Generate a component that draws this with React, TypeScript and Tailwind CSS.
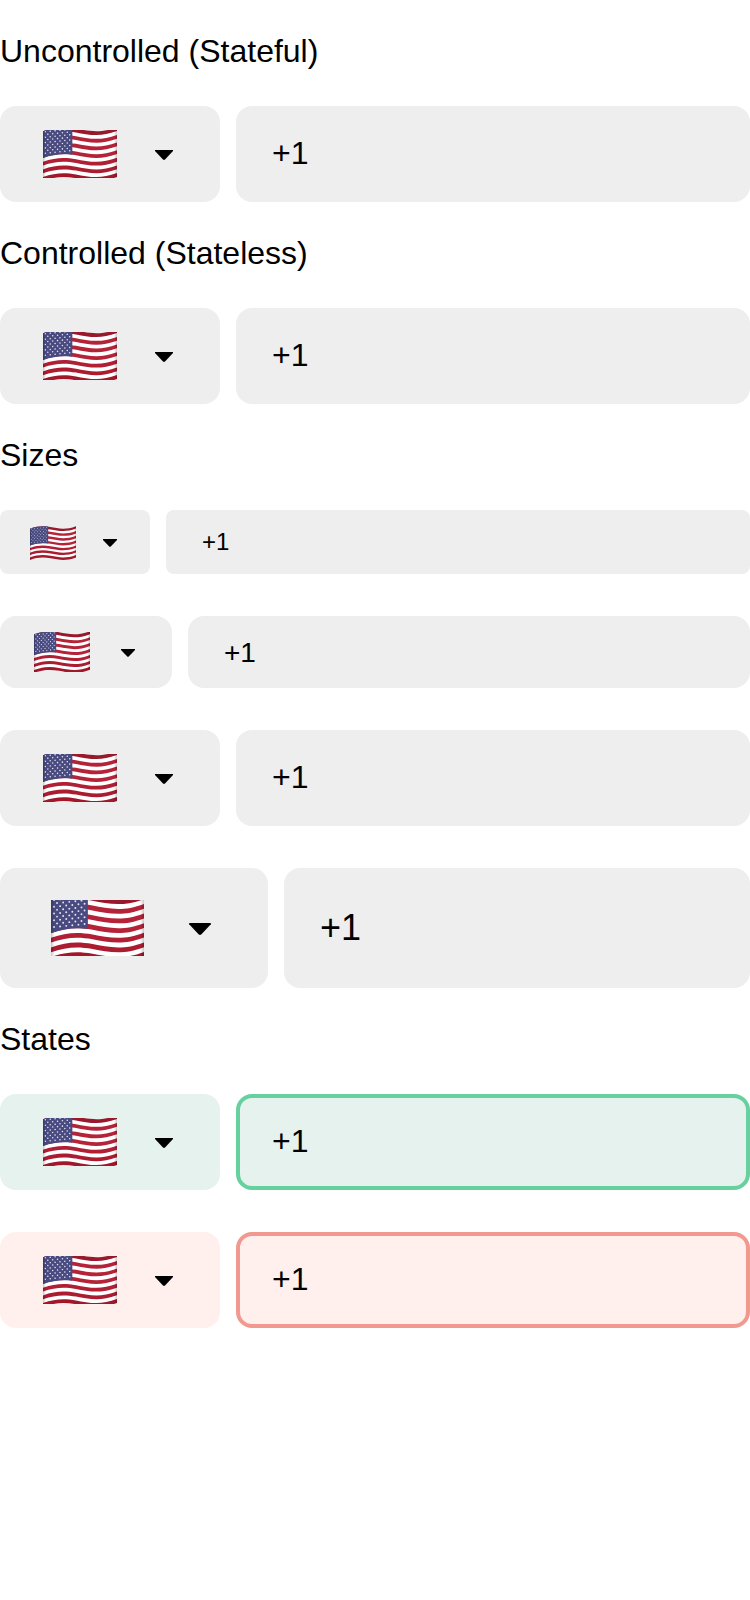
import { useId, useState } from "react";

type Size = "mini" | "compact" | "default" | "large";
type State = "idle" | "positive" | "error";

const sizes: Record<Size, { select: string; field: string; flag: string; art: string; caret: string }> = {
  mini: {
    select: "w-[150px] h-16 pt-0.5 pl-[30px] pr-[33px] rounded-lg",
    field: "h-16 text-2xl rounded-lg",
    flag: "w-[46px] h-9",
    art: "w-[46px] h-[34px]",
    caret: "w-[14px] h-2",
  },
  compact: {
    select: "w-[172px] h-[72px] pl-[34px] pr-[37px] rounded-2xl",
    field: "h-[72px] pt-0.5 text-[28px] rounded-2xl",
    flag: "w-14 h-10",
    art: "w-14 h-[42px]",
    caret: "w-[14px] h-2 mt-0.5",
  },
  default: {
    select: "w-[220px] h-24 pl-[43px] pr-[47px] rounded-2xl",
    field: "h-24 pb-0.5 text-[32px] rounded-2xl",
    flag: "w-[74px] h-12",
    art: "w-[74px] h-[54px]",
    caret: "w-[18px] h-[10px] mt-0.5",
  },
  large: {
    select: "w-[268px] h-[120px] pl-[51px] pr-[57px] rounded-2xl",
    field: "h-[120px] text-4xl rounded-2xl",
    flag: "w-[93px] h-14",
    art: "w-[93px] h-[68px]",
    caret: "w-[22px] h-3 mt-0.5",
  },
};

const states: Record<State, { select: string; field: string }> = {
  idle: { select: "bg-[#eeeeee]", field: "bg-[#eeeeee] border-[#eeeeee]" },
  positive: { select: "bg-[#e6f2ed]", field: "bg-[#e6f2ed] border-[#66d19e]" },
  error: { select: "bg-[#ffefed]", field: "bg-[#ffefed] border-[#f1998e]" },
};

// A band of the given height whose two edges follow the cloth's wave.
function wave(y: number, height: number) {
  const b = y + height;
  return `M0 ${y + 10}C45 ${y - 6} 80 ${y - 8} 125 ${y}S215 ${y + 20} 280 ${y - 5}V${b - 5}C215 ${b + 20} 170 ${b + 8} 125 ${b}S45 ${b - 6} 0 ${b + 10}Z`;
}

const stripe = 14.5;
const reds = ["#97192b", "#b52338", "#b52338", "#b52338", "#b01f34", "#ab1c30", "#a0182a"];

function Flag({ className }: { className: string }) {
  const id = useId();
  const stars = [];
  for (let row = 0; row < 9; row++) {
    const odd = row % 2 === 1;
    for (let i = 0; i < (odd ? 5 : 6); i++) {
      const x = 9 + i * 18.4 + (odd ? 9.2 : 0);
      const y = 19 + row * 10.2 - x * 0.1;
      stars.push(<circle key={`${row}-${i}`} cx={x} cy={y} r="2.9" fill="#e6e6f2" />);
    }
  }
  return (
    <svg className={className} viewBox="0 0 280 205" preserveAspectRatio="none" aria-hidden="true">
      <defs>
        <linearGradient id={id} x1="0" x2="1">
          <stop offset="0" stopColor="#000" stopOpacity=".22" />
          <stop offset=".04" stopColor="#000" stopOpacity="0" />
          <stop offset=".96" stopColor="#000" stopOpacity="0" />
          <stop offset="1" stopColor="#000" stopOpacity=".22" />
        </linearGradient>
      </defs>
      <path d={wave(6, stripe * 13)} fill="#fff" />
      {reds.map((fill, i) => (
        <path key={i} d={wave(6 + i * stripe * 2, stripe)} fill={fill} />
      ))}
      <path d="M0 16C40 2 72 -1 111 3V105C72 101 40 104 0 118Z" fill="#484a80" />
      {stars}
      <path d={wave(6, stripe * 13)} fill={`url(#${id})`} />
    </svg>
  );
}

function PhoneInput({ size = "default", state = "idle", label }: { size?: Size; state?: State; label: string }) {
  const [value, setValue] = useState("+1");
  const s = sizes[size];
  const c = states[state];
  return (
    <div className="flex gap-4">
      <button
        type="button"
        aria-label={`${label} country`}
        className={`flex shrink-0 items-center justify-between ${s.select} ${c.select}`}
      >
        <span className={`flex items-center overflow-hidden ${s.flag}`}>
          <Flag className={`shrink-0 ${s.art}`} />
        </span>
        <svg className={s.caret} viewBox="0 0 18 10" aria-hidden="true">
          <path d="M0 0H18V1L10 9.5Q9 10.3 8 9.5L0 1Z" />
        </svg>
      </button>
      <input
        type="tel"
        aria-label={label}
        value={value}
        onChange={(e) => setValue(e.target.value)}
        className={`min-w-0 flex-1 border-4 px-8 text-black outline-none ${s.field} ${c.field}`}
      />
    </div>
  );
}

function Heading({ children }: { children: string }) {
  return <h2 className="pt-[30px] pb-[34px] text-[32px] leading-[42px]">{children}</h2>;
}

export default function App() {
  return (
    <main className="bg-white font-['Liberation_Sans',Arial,sans-serif] text-black">
      <Heading>Uncontrolled (Stateful)</Heading>
      <PhoneInput label="Uncontrolled phone" />
      <Heading>Controlled (Stateless)</Heading>
      <PhoneInput label="Controlled phone" />
      <Heading>Sizes</Heading>
      <div className="flex flex-col gap-[42px]">
        <PhoneInput size="mini" label="Mini phone" />
        <PhoneInput size="compact" label="Compact phone" />
        <PhoneInput size="default" label="Default phone" />
        <PhoneInput size="large" label="Large phone" />
      </div>
      <Heading>States</Heading>
      <div className="flex flex-col gap-[42px]">
        <PhoneInput state="positive" label="Positive phone" />
        <PhoneInput state="error" label="Error phone" />
      </div>
    </main>
  );
}
